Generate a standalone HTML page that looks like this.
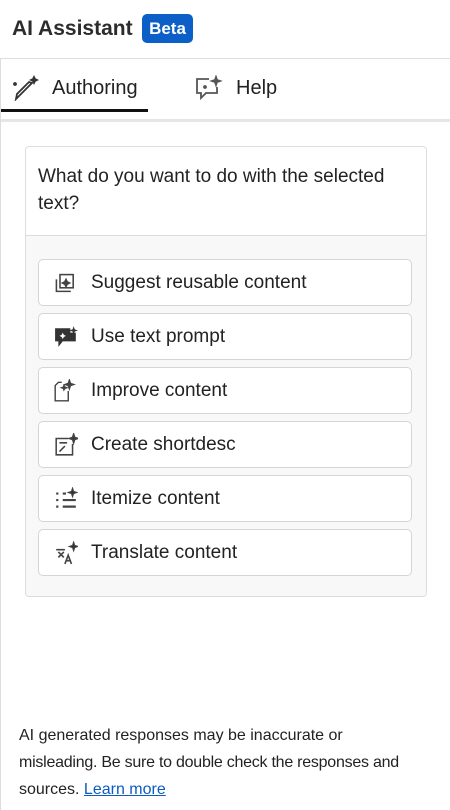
<!DOCTYPE html><html><head><style>
body{margin:0;width:450px;height:810px;background:#fff;font-family:"Liberation Sans",sans-serif;color:#222;position:relative;overflow:hidden}
.abs{position:absolute}
.title{left:12px;top:17px;font-size:21px;font-weight:bold;color:#2c2c2c}
.beta{left:142px;top:14px;width:51px;height:29px;background:#0c5fc6;border-radius:5px;color:#fff;font-size:17px;font-weight:bold;text-align:center;line-height:29px}
.card{left:25px;top:146px;width:400px;height:449px;border:1px solid #ddd;border-radius:4px;background:#f8f8f8}
.q{left:0;top:0;width:400px;height:88px;background:#fff;border-bottom:1px solid #ddd;border-radius:4px 4px 0 0}
.btn{left:12px;width:372px;height:45px;border:1px solid #d5d5d5;border-radius:5px;background:#fff;font-size:19px;line-height:45px;color:#222}
.btn span{position:absolute;left:52px}
.btn svg{position:absolute;left:15px;top:11px}
</style></head><body>
<div class="abs title">AI Assistant</div>
<div class="abs beta">Beta</div>
<div class="abs" style="left:0;top:58px;width:450px;height:1px;background:#ddd"></div>
<div class="abs" style="left:0;top:58px;width:1px;height:752px;background:#ddd"></div>
<svg class="abs" style="left:12px;top:75px" width="28" height="26" viewBox="0 0 28 26" fill="none" stroke="#333" stroke-width="1.8"><path d="M20 8 L8 20 L4 24 L5 19 L17 7 Z"/><path d="M22 2l1 2 2 1-2 1-1 2-1-2-2-1 2-1z" fill="#333"/><circle cx="3" cy="9" r="1" fill="#333"/></svg>
<div class="abs" style="left:52px;top:77px;font-size:20px;color:#222">Authoring</div>
<svg class="abs" style="left:195px;top:75px" width="28" height="26" viewBox="0 0 28 26" fill="none" stroke="#555" stroke-width="1.8"><path d="M14 4H2v14h4v5l5-5h11v-6"/><path d="M21 2l1 3 3 1-3 1-1 3-1-3-3-1 3-1z" fill="#555"/><circle cx="10" cy="12" r="1" fill="#555"/></svg>
<div class="abs" style="left:236px;top:77px;font-size:20px;color:#222">Help</div>
<div class="abs" style="left:1px;top:109px;width:147px;height:3px;background:#111"></div>
<div class="abs" style="left:1px;top:119px;width:449px;height:3px;background:#e6e6e6"></div>
<div class="abs card">
<div class="abs q"><div class="abs" style="left:12px;top:16px;width:370px;font-size:19px;line-height:27px;color:#222">What do you want to do with the selected text?</div></div>
<div class="abs btn" style="top:112px"><svg width="24" height="24" viewBox="0 0 20 20" fill="none" stroke="#444" stroke-width="1.3"><rect x="5" y="3" width="11" height="11"/><path d="M2 7v10h12"/><path d="M10 7l1 2 2 1-2 1-1 2-1-2-2-1 2-1z" fill="#444"/></svg><span>Suggest reusable content</span></div>
<div class="abs btn" style="top:166px"><svg width="24" height="24" viewBox="0 0 22 22"><path d="M1 3h14v4h5v8H8l-4 5v-5H1z" fill="#333"/><path d="M18 1l1 3 3 1-3 1-1 3-1-3-3-1 3-1z" fill="#333"/><path d="M8 7l1 2 2 1-2 1-1 2-1-2-2-1 2-1z" fill="#fff"/></svg><span>Use text prompt</span></div>
<div class="abs btn" style="top:220px"><svg width="22" height="24" viewBox="0 0 20 22" fill="none" stroke="#444" stroke-width="1.3"><path d="M7 3H4l-3 3v14h12V11"/><path d="M14 1l1 3 3 1-3 1-1 3-1-3-3-1 3-1z" fill="#444"/><path d="M9 6l1 1.5 1.5.5-1.5.5-1 1.5-.5-1.5L7 8l1.5-.5z" fill="#444"/></svg><span>Improve content</span></div>
<div class="abs btn" style="top:274px"><svg width="24" height="24" viewBox="0 0 22 22" fill="none" stroke="#444" stroke-width="1.4"><path d="M13 5H2v15h15V10"/><path d="M5 9h7M5 17l5-5"/><path d="M18 1l1 3 3 1-3 1-1 3-1-3-3-1 3-1z" fill="#333"/></svg><span>Create shortdesc</span></div>
<div class="abs btn" style="top:328px"><svg width="24" height="24" viewBox="0 0 22 22" fill="none" stroke="#444" stroke-width="2"><path d="M2 6h2M2 12h2M2 18h2M8 12h12M8 18h12M8 6h3"/><path d="M17 1l1 3 3 1-3 1-1 3-1-3-3-1 3-1z" fill="#333" stroke-width="1"/></svg><span>Itemize content</span></div>
<div class="abs btn" style="top:382px"><svg width="24" height="24" viewBox="0 0 22 22" fill="none" stroke="#444" stroke-width="1.5"><path d="M2 8h8M4 10l5 5M9 10l-5 5M10 21l3-8 3 8M11 18h4"/><path d="M18 1l1 3 3 1-3 1-1 3-1-3-3-1 3-1z" fill="#333" stroke-width="1"/></svg><span>Translate content</span></div>
</div>
<div class="abs" style="left:19px;top:722px;width:430px;font-size:16px;line-height:27px;color:#222;white-space:nowrap">AI generated responses may be inaccurate or<br><span style="letter-spacing:-0.25px">misleading. Be sure to double check the responses and</span><br>sources. <span style="color:#0a5cc2;text-decoration:underline">Learn more</span></div>
</body></html>
